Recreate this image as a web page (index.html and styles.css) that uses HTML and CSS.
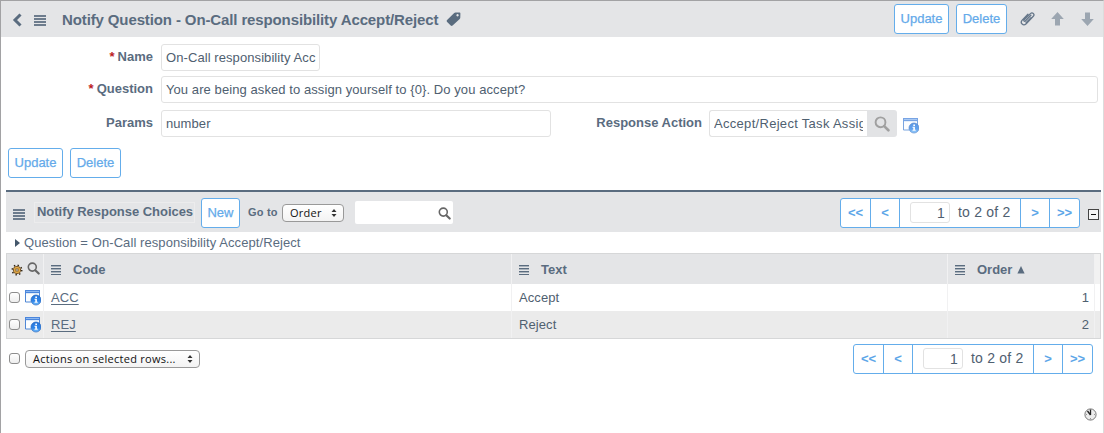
FILE: index.html
```html
<!DOCTYPE html>
<html lang="en">
<head>
<meta charset="utf-8">
<title>Notify Question</title>
<link rel="stylesheet" href="styles.css">
</head>
<body>
<svg class="defs" width="0" height="0">
  <defs>
    <linearGradient id="ball" x1="0" y1="0" x2="0" y2="1"><stop offset="0" stop-color="#2877dc"/><stop offset=".6" stop-color="#2d83e8"/><stop offset="1" stop-color="#7cc4ff"/></linearGradient>
    <symbol id="info" viewBox="0 0 16 16">
      <path d="M.5 .5h14v11.500h-14z" fill="#fbfdff"/>
      <path d="M0 0h15v4H0z" fill="#4b86dc"/>
      <path d="M1 1h13v1H1z" fill="#8db8f0"/>
      <path d="M1 3h13v1H1z" fill="#dceafa"/>
      <path d="M.5 4v8H6M14.500 4v3" fill="none" stroke="#4f87d5"/>
      <circle cx="11" cy="10" r="5" fill="url(#ball)" stroke="#2464bd" stroke-width=".7"/>
      <path d="M10.300 6.600h1.700v1.300h-1.700zM9.500 8.800h2.400v3h.8v1h-3.200v-1h.8v-2h-.8z" fill="#fff"/>
    </symbol>
    <symbol id="glass" viewBox="0 0 14 14">
      <circle cx="5.700" cy="5.500" r="4.300" fill="none" stroke="currentColor" stroke-width="1.700"/>
      <path d="M8.900 8.800l3.700 3.700" stroke="currentColor" stroke-width="2.300" stroke-linecap="round"/>
    </symbol>
    <symbol id="updown" viewBox="0 0 6 8"><path d="M3 0l2.500 3h-5zM3 8l2.500-3h-5z" fill="#333"/></symbol>
  </defs>
</svg>
<div class="frame">
  <header class="bar">
    <svg class="back" width="10" height="14" viewBox="0 0 10 14"><path d="M8.500 1.500L3 7l5.500 5.500" fill="none" stroke="#5a6c7f" stroke-width="3"/></svg>
    <i class="lines big"></i>
    <h1>Notify Question - On-Call responsibility Accept/Reject</h1>
    <svg class="tag" width="15" height="15" viewBox="0 0 15 15"><path d="M8.200.9Q8.700.4 9.500.4L13.600.6q.8 0 .8.900L14.300 5.500q0 .8-.6 1.400L6.600 13.500q-1 .9-1.900 0L.9 9.700Q.2 8.900 1.100 8zM11.500 2a1.200 1.200 0 1 0 .1 0z" fill="#5a6c7f" fill-rule="evenodd"/></svg>
    <div class="tools">
      <span class="btn update">Update</span><span class="btn delete">Delete</span>
      <svg class="clip" width="16" height="16" viewBox="0 0 16 16"><path d="M10.900 4.300L5.300 10c-.8.900-2-.2-1.200-1.100L10.400 2.600c2-1.900 4.800.5 2.900 2.700L6.200 12.700C3.300 15.500-.4 12.100 2.200 9.100L7.900 3.300M11 6.700l-4.900 5" fill="none" stroke="#66778a" stroke-width="1.300" stroke-linecap="round"/></svg>
      <svg class="up" width="13" height="14" viewBox="0 0 13 14"><path d="M6.500 0l6.300 7H9v6.500H4V7H.2z" fill="#9ca6b1"/></svg>
      <svg class="down" width="13" height="14" viewBox="0 0 13 14"><path d="M6.500 14l6.300-7H9V.5H4V7H.2z" fill="#9ca6b1"/></svg>
    </div>
  </header>

  <section class="form">
    <div class="row"><label><b class="req">*</b><span>Name</span></label><div class="field name"><span>On-Call responsibility Acc</span></div></div>
    <div class="row question"><label><b class="req">*</b><span>Question</span></label><div class="field wide"><span>You are being asked to assign yourself to {0}. Do you accept?</span></div></div>
    <div class="row params"><label><span>Params</span></label><div class="field half"><span>number</span></div>
      <label class="second"><span>Response Action</span></label><div class="field ref"><span class="clipped">Accept/Reject Task Assig</span></div><span class="lookup"><svg width="16" height="16"><use href="#glass"/></svg></span>
      <svg class="info pale" width="16" height="16"><use href="#info"/></svg>
    </div>
  </section>
  <div class="actions"><span class="btn update">Update</span><span class="btn delete">Delete</span></div>

  <section class="list">
    <div class="listbar">
      <i class="lines big"></i>
      <h2><span>Notify Response Choices</span></h2>
      <span class="btn new">New</span>
      <span class="goto">Go to</span>
      <span class="select order"><span>Order</span><svg width="6" height="8"><use href="#updown"/></svg></span>
      <span class="search"><svg width="13" height="13" viewBox="0 0 14 14"><use href="#glass" width="14" height="14"/></svg></span>
      <div class="pager"><b>&lt;&lt;</b><b>&lt;</b><div class="range"><span class="page">1</span><span class="total">to 2 of 2</span></div><b>&gt;</b><b>&gt;&gt;</b></div>
      <i class="collapse"></i>
    </div>
    <div class="crumb"><svg width="5" height="8" viewBox="0 0 5 8"><path d="M0 0l5 4-5 4z" fill="#44576b"/></svg><span>Question = On-Call responsibility Accept/Reject</span></div>
    <div class="grid">
      <div class="tr head">
        <div class="c0"><svg class="gear" width="12" height="12" viewBox="0 0 12 12"><circle cx="6" cy="6" r="4.800" fill="none" stroke="#2c2010" stroke-width="1.400" stroke-dasharray="1.400 2.370"/><circle cx="6" cy="6" r="3.700" fill="#f7bd55" stroke="#5b3a10" stroke-width=".8"/><path d="M6 3v6M3 6h6M4 4l4 4M8 4l-4 4" stroke="#9a681f" stroke-width=".5"/><circle cx="6" cy="6" r="1.200" fill="#fff" stroke="#4b300d" stroke-width=".7"/></svg><svg class="hg" width="13" height="13"><use href="#glass"/></svg></div>
        <div class="c1"><i class="lines"></i><span>Code</span></div>
        <div class="c2"><i class="lines"></i><span>Text</span></div>
        <div class="c3"><i class="lines"></i><span>Order</span><svg class="asc" width="8" height="8" viewBox="0 0 8 8"><path d="M4 0l3.600 7.500H.4z" fill="#5a6c7f"/></svg></div>
        <div class="c4"></div>
      </div>
      <div class="tr">
        <div class="c0"><i class="check"></i><svg class="info" width="16" height="16"><use href="#info"/></svg></div>
        <div class="c1"><a>ACC</a></div><div class="c2">Accept</div><div class="c3">1</div><div class="c4"></div>
      </div>
      <div class="tr alt">
        <div class="c0"><i class="check"></i><svg class="info" width="16" height="16"><use href="#info"/></svg></div>
        <div class="c1"><a>REJ</a></div><div class="c2">Reject</div><div class="c3">2</div><div class="c4"></div>
      </div>
    </div>
    <div class="foot">
      <i class="check"></i>
      <span class="select bulk"><span>Actions on selected rows...</span><svg width="6" height="8"><use href="#updown"/></svg></span>
      <div class="pager"><b>&lt;&lt;</b><b>&lt;</b><div class="range"><span class="page">1</span><span class="total">to 2 of 2</span></div><b>&gt;</b><b>&gt;&gt;</b></div>
    </div>
  </section>
  <div class="timing"><svg width="13" height="13" viewBox="0 0 13 13"><circle cx="6.500" cy="6.500" r="5.600" fill="#ececec" stroke="#777"/><path d="M6.500 1.500v5.500M6.500 7L3.500 3" stroke="#222" stroke-width="1.300"/><path d="M6.500 10v1.500M2 6.500h1M10 6.500h1" stroke="#999"/></svg></div>
</div>
</body>
</html>
```
FILE: styles.css
```css
* { box-sizing: border-box; }
body { margin: 0; background: #fff; color: #4f6070; font: 13px/16px "Liberation Sans", Arial, sans-serif; letter-spacing: .08px; overflow: hidden; }
.defs { position: absolute; }
svg { display: block; flex: none; }
h1, h2 { margin: 0; color: #5a6c7f; white-space: nowrap; }
span { white-space: nowrap; }
.frame { width: 1104px; height: 433px; border: 1px solid #a2a2a4; border-right-color: #dcdcdc; border-bottom: 0; }
.bar { height: 36px; background: #e4e5e7; display: flex; align-items: center; padding: 0 9px 0 11px; }
.back { margin-top: 2px; }
.lines { display: block; flex: none; width: 10px; height: 10px; background: repeating-linear-gradient(#5a6c7f 0 1px, #a9b2bb 1px 2px, #e4e5e7 2px 3px); }
.lines.big { width: 12px; height: 11px; background: repeating-linear-gradient(#6d7c8d 0 2px, #e4e5e7 2px 3px); }
.bar .lines { margin: 2px 0 0 12px; }
h1 { font-size: 15px; letter-spacing: -.12px; margin: 2px 0 0 16px; }
.tag { margin-left: 8px; }
.tools { margin-left: auto; display: flex; align-items: center; }
.btn { display: flex; justify-content: center; height: 30px; padding-top: 6px; border: 1px solid #64adeb; border-radius: 3px; background: #fff; color: #64aaea; letter-spacing: 0; -webkit-text-stroke: .25px #64aaea; }
.update { width: 55px; }
.delete { width: 51px; margin-left: 7px; }
.clip { margin-left: 13px; }
.up { margin-left: 15px; }
.down { margin-left: 17px; }
.form { padding-top: 7px; }
.row { display: flex; height: 27px; }
.question { margin-top: 5px; }
.params { margin-top: 7px; }
label { width: 152px; display: flex; justify-content: flex-end; gap: 3px; padding-top: 5px; font-weight: bold; letter-spacing: 0; color: #5a6c7f; }
.req { color: #bb1c1c; }
.field { height: 27px; margin-left: 8px; padding: 5px 4px; border: 1px solid #e2e2e2; border-radius: 3px; overflow: hidden; }
.field.name { width: 159px; }
.wide { width: 937px; }
.half { width: 390px; }
label.second { width: 151px; }
.field.ref { width: 158px; margin-left: 7px; border-right: 0; border-radius: 3px 0 0 3px; }
.clipped { display: block; overflow: hidden; width: 149px; letter-spacing: .3px; }
.lookup { width: 30px; height: 27px; background: #e2e3e5; border-radius: 0 3px 3px 0; color: #a0a0a0; padding: 6px 0 0 7px; }
.pale { opacity: .75; margin: 8px 0 0 6px; }
.actions { display: flex; padding: 11px 0 0 7px; }
.list { width: 1095px; margin: 12px 0 0 5px; border-top: 2px solid #5a6c7f; }
.listbar { height: 40px; background: #e4e5e7; display: flex; padding-left: 7px; }
.listbar .lines { margin-top: 17px; }
h2 { font-size: 13px; letter-spacing: -.03px; width: 161px; height: 21px; margin: 10px 0 0 9px; padding: 1px 0 0 2px; border: 1px solid #ececed; }
.new { width: 39px; margin: 6px 0 0 6px; }
.goto { font-size: 11px; letter-spacing: .2px; font-weight: bold; color: #5a6c7f; margin: 12px 0 0 8px; width: 34px; }
.select { display: flex; align-items: center; justify-content: space-between; height: 18px; border: 1px solid #999; border-radius: 4px; background: linear-gradient(#fff, #f3f3f3); color: #111; font: 11px/14px "Open Sans", sans-serif; letter-spacing: .27px; padding: 0 6px 0 7px; }
.order { width: 62px; margin-top: 12px; }
.search { width: 98px; height: 23px; margin: 9px 0 0 11px; background: #fff; border-radius: 2px; color: #666; padding: 6px 0 0 83px; }
.pager { margin-left: auto; width: 240px; height: 30px; border: 1px solid #64adeb; border-radius: 3px; display: flex; background: #fff; color: #5ca6e8; }
.listbar .pager { margin-top: 6px; }
.pager b { width: 30px; padding-top: 6px; text-align: center; letter-spacing: 0; }
.pager b:nth-child(2) { width: 29px; border-left: 1px solid #64adeb; }
.pager b:nth-child(4) { width: 28px; }
.pager b:nth-child(5) { border-left: 1px solid #64adeb; }
.pager b:nth-child(1) { width: 29px; }
.range { width: 122px; display: flex; border: solid #64adeb; border-width: 0 1px; color: #4f6070; font-size: 14px; letter-spacing: .2px; }
.page { width: 40px; height: 21px; margin: 3px 0 0 10px; border: 1px solid #e2e2e2; border-radius: 3px; text-align: right; padding: 2px 4px 0 0; }
.total { margin: 5px 0 0 8px; }
.collapse { width: 11px; height: 11px; border: 1px solid #444; background: linear-gradient(#111,#111) center/5px 1px no-repeat #f7f7f7; margin: 17px 2px 0 8px; }
.crumb { height: 21px; display: flex; padding: 3px 0 0 9px; color: #5a6c7f; }
.crumb svg { margin: 4px 4px 0 0; }
.grid { border: 1px solid #d6d7d8; }
.tr { display: grid; grid-template-columns: 36px 468px 436px 147px 6px; height: 27px; }
.tr > div + div { border-left: 1px solid #f1f1f2; }
.tr.head { height: 30px; background: #e4e5e7; font-weight: bold; color: #5a6c7f; letter-spacing: 0; }
.alt { background: #ebebeb; }
.c0 { display: flex; }
.tr .c1, .tr .c2 { padding: 6px 0 0 7px; }
.tr .c3 { padding: 6px 5px 0 0; text-align: right; }
.head .c1, .head .c2, .head .c3 { display: flex; padding: 8px 0 0 7px; }
.head .lines { margin: 3px 12px 0 0; }
.head .c4 { background: #f2f2f2; }
.gear { margin: 10px 0 0 4px; }
.hg { margin: 8px 0 0 4px; color: #666; }
.asc { margin: 4px 0 0 5px; }
.check { display: block; width: 11px; height: 11px; border: 1px solid #8d8d8d; border-radius: 3px; background: linear-gradient(#fff,#eee); margin: 8px 0 0 2px; }
.tr .info { margin: 6px 0 0 5px; }
a { color: #5a6c7f; text-decoration: underline; text-underline-offset: 2px; }
.foot { height: 35px; display: flex; padding: 5px 8px 0 1px; }
.foot .check { margin-top: 9px; }
.bulk { width: 175px; margin: 6px 0 0 5px; }
.timing { display: flex; justify-content: flex-end; padding: 34px 6px 0 0; }
```
